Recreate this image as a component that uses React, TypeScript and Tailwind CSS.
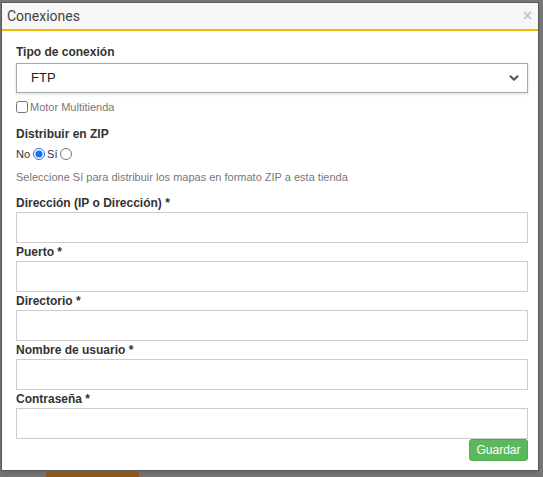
import { ChevronDown } from 'lucide-react';

const fields = ['Dirección (IP o Dirección)', 'Puerto', 'Directorio', 'Nombre de usuario', 'Contraseña'];

const Label = ({ text, required }: { text: string; required?: boolean }) => (
    <label className="block h-[18px] text-[12px] leading-[18px] font-bold text-[#333]">
        {text}
        {required && ' *'}
    </label>
);

export default function App() {
    return (
        <div className="w-[543px] h-[477px] overflow-hidden bg-[#777] pl-[1px] pt-[2px] font-['Liberation_Sans',Arial,sans-serif]">
            <div className="w-[538px] h-[469px] overflow-hidden bg-white border border-[#5a5a5a] shadow-md">
                <div className="h-[28px] bg-[#f7f7f7] border-b-2 border-[#f5b800] flex items-center justify-between pl-[5px] pr-[6px]">
                    <span className="text-[14px] text-[#444] font-['Roboto',sans-serif]">Conexiones</span>
                    <span className="text-[16px] leading-none font-bold text-[#c8c4d4]">×</span>
                </div>
                <div className="pl-[14px] pr-[10px] pt-[12px]">
                    <Label text="Tipo de conexión" />
                    <div className="mt-[2px] h-[30px] border border-[#aaa] shadow-[0_1px_3px_rgba(0,0,0,0.15)] flex items-center justify-between pl-[14px] pr-[6px]">
                        <span className="text-[13px] text-[#222]">FTP</span>
                        <ChevronDown size={14} strokeWidth={3.5} className="text-[#555]" />
                    </div>
                    <label className="mt-[7px] h-[14px] flex items-center gap-[2px] text-[11px] text-[#777]">
                        <input type="checkbox" className="m-0 w-[12px] h-[12px]" />
                        Motor Multitienda
                    </label>
                    <div className="mt-[11px]">
                        <Label text="Distribuir en ZIP" />
                    </div>
                    <div className="mt-[4px] h-[14px] flex items-center text-[11px] text-[#333]">
                        <span>No</span>
                        <input type="radio" name="zip" defaultChecked className="ml-[3px] mr-[2px] w-[12px] h-[12px] accent-[#1a73e8]" />
                        <span>Sí</span>
                        <input type="radio" name="zip" className="ml-[3px] w-[12px] h-[12px]" />
                    </div>
                    <p className="mt-[9px] h-[14px] leading-[14px] text-[11px] text-[#777]">Seleccione Sí para distribuir los mapas en formato ZIP a esta tienda</p>
                    <div className="mt-[10px]">
                        {fields.map((f) => (
                            <div key={f}>
                                <Label text={f} required />
                                <input type="text" className="block w-full h-[31px] border border-[#ccc] outline-none" />
                            </div>
                        ))}
                    </div>
                    <div className="flex justify-end">
                        <button className="h-[22px] w-[59px] rounded-[3px] bg-[#5cb85c] border border-[#4cae4c] text-white text-[12px]">Guardar</button>
                    </div>
                </div>
            </div>
            <div className="ml-[45px] w-[93px] h-[10px] bg-[#8a5a1a]" />
        </div>
    );
}
